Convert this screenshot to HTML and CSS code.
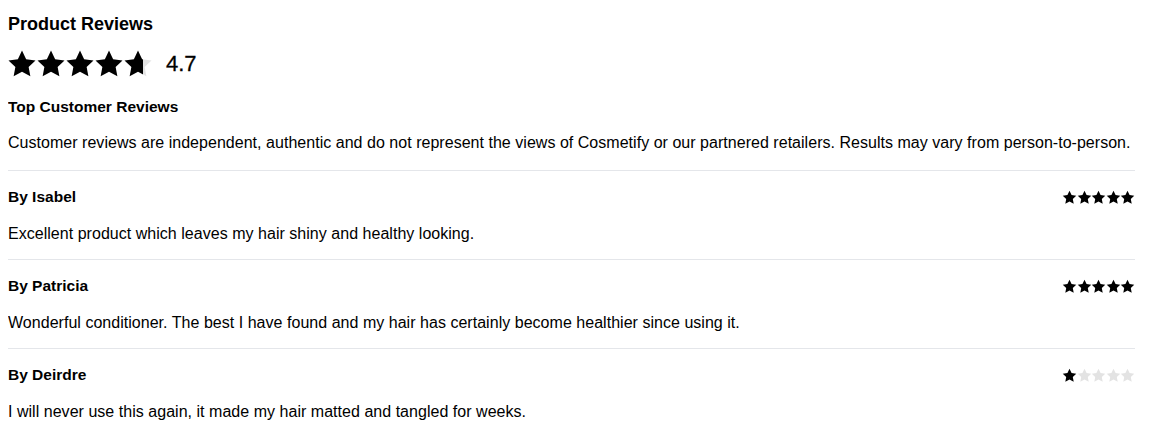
FILE: index.html
```html
<!DOCTYPE html>
<html lang="en">

<head>
    <meta charset="UTF-8">
    <meta name="viewport" content="width=device-width, initial-scale=1.0">
    <title>Product Reviews</title>
    <link rel="stylesheet" href="styles.css">
</head>

<body>
    <svg width="0" height="0" class="defs">
        <defs>
            <symbol id="star" viewBox="0 0 24 24">
                <path d="M12 1.2l3.3 6.9 7.5 1-5.5 5.2 1.4 7.5L12 18.2l-6.7 3.6 1.4-7.5L1.2 9.1l7.5-1z" />
            </symbol>
            <linearGradient id="part">
                <stop offset="0.7" stop-color="#000" />
                <stop offset="0.7" stop-color="#e3e3e3" />
            </linearGradient>
        </defs>
    </svg>

    <div class="reviews">
        <h2 class="title">Product Reviews</h2>
        <div class="overall">
            <div class="big-stars">
                <svg><use href="#star" /></svg>
                <svg><use href="#star" /></svg>
                <svg><use href="#star" /></svg>
                <svg><use href="#star" /></svg>
                <svg class="partial"><use href="#star" /></svg>
            </div>
            <span class="score">4.7</span>
        </div>
        <h3 class="subtitle">Top Customer Reviews</h3>
        <p class="note">Customer reviews are independent, authentic and do not represent the views of Cosmetify or our partnered retailers. Results may vary from person-to-person.</p>

        <div class="review">
            <div class="review-head">
                <span class="author">By Isabel</span>
                <div class="stars">
                    <svg><use href="#star" /></svg>
                    <svg><use href="#star" /></svg>
                    <svg><use href="#star" /></svg>
                    <svg><use href="#star" /></svg>
                    <svg><use href="#star" /></svg>
                </div>
            </div>
            <p class="text">Excellent product which leaves my hair shiny and healthy looking.</p>
        </div>

        <div class="review">
            <div class="review-head">
                <span class="author">By Patricia</span>
                <div class="stars">
                    <svg><use href="#star" /></svg>
                    <svg><use href="#star" /></svg>
                    <svg><use href="#star" /></svg>
                    <svg><use href="#star" /></svg>
                    <svg><use href="#star" /></svg>
                </div>
            </div>
            <p class="text">Wonderful conditioner. The best I have found and my hair has certainly become healthier since using it.</p>
        </div>

        <div class="review">
            <div class="review-head">
                <span class="author">By Deirdre</span>
                <div class="stars">
                    <svg><use href="#star" /></svg>
                    <svg class="off"><use href="#star" /></svg>
                    <svg class="off"><use href="#star" /></svg>
                    <svg class="off"><use href="#star" /></svg>
                    <svg class="off"><use href="#star" /></svg>
                </div>
            </div>
            <p class="text">I will never use this again, it made my hair matted and tangled for weeks.</p>
        </div>
    </div>
</body>

</html>
```

FILE: styles.css
```css
body {
    margin: 8px;
    font-family: "Liberation Sans", Arial, sans-serif;
    color: #000;
    background: #fff;
}

.defs {
    position: absolute;
}

.reviews {
    width: 1127px;
}

.title {
    margin: 2px 0 0;
    font-size: 18px;
    font-weight: 600;
    line-height: 28px;
}

.overall {
    margin-top: 10px;
    height: 32px;
    display: flex;
    align-items: center;
}

.big-stars {
    display: flex;
}

.big-stars svg {
    width: 30px;
    height: 30px;
    fill: #000;
    margin-left: -1px;
}

.big-stars .partial {
    fill: url(#part);
}

.score {
    margin-left: 13px;
    font-size: 22px;
    font-weight: 500;
    -webkit-text-stroke: 0.3px #000;
}

.subtitle {
    margin: 17px 0 0;
    font-size: 15.5px;
    font-weight: 700;
    line-height: 20px;
}

.note {
    margin: 14px 0 15px;
    font-size: 16px;
    line-height: 24px;
    letter-spacing: 0.03px;
}

.review {
    border-top: 1px solid #e4e6ea;
    padding: 16px 0 13px;
}

.review-head {
    display: flex;
    justify-content: space-between;
    align-items: center;
    height: 20px;
}

.author {
    font-size: 15.5px;
    font-weight: 700;
}

.stars {
    display: flex;
}

.stars svg {
    width: 15px;
    height: 15px;
    fill: #000;
    margin-left: -0.5px;
}

.stars .off {
    fill: #e3e3e3;
}

.text {
    margin: 15px 0 0;
    font-size: 16px;
    line-height: 24px;
    letter-spacing: 0.03px;
}
```
